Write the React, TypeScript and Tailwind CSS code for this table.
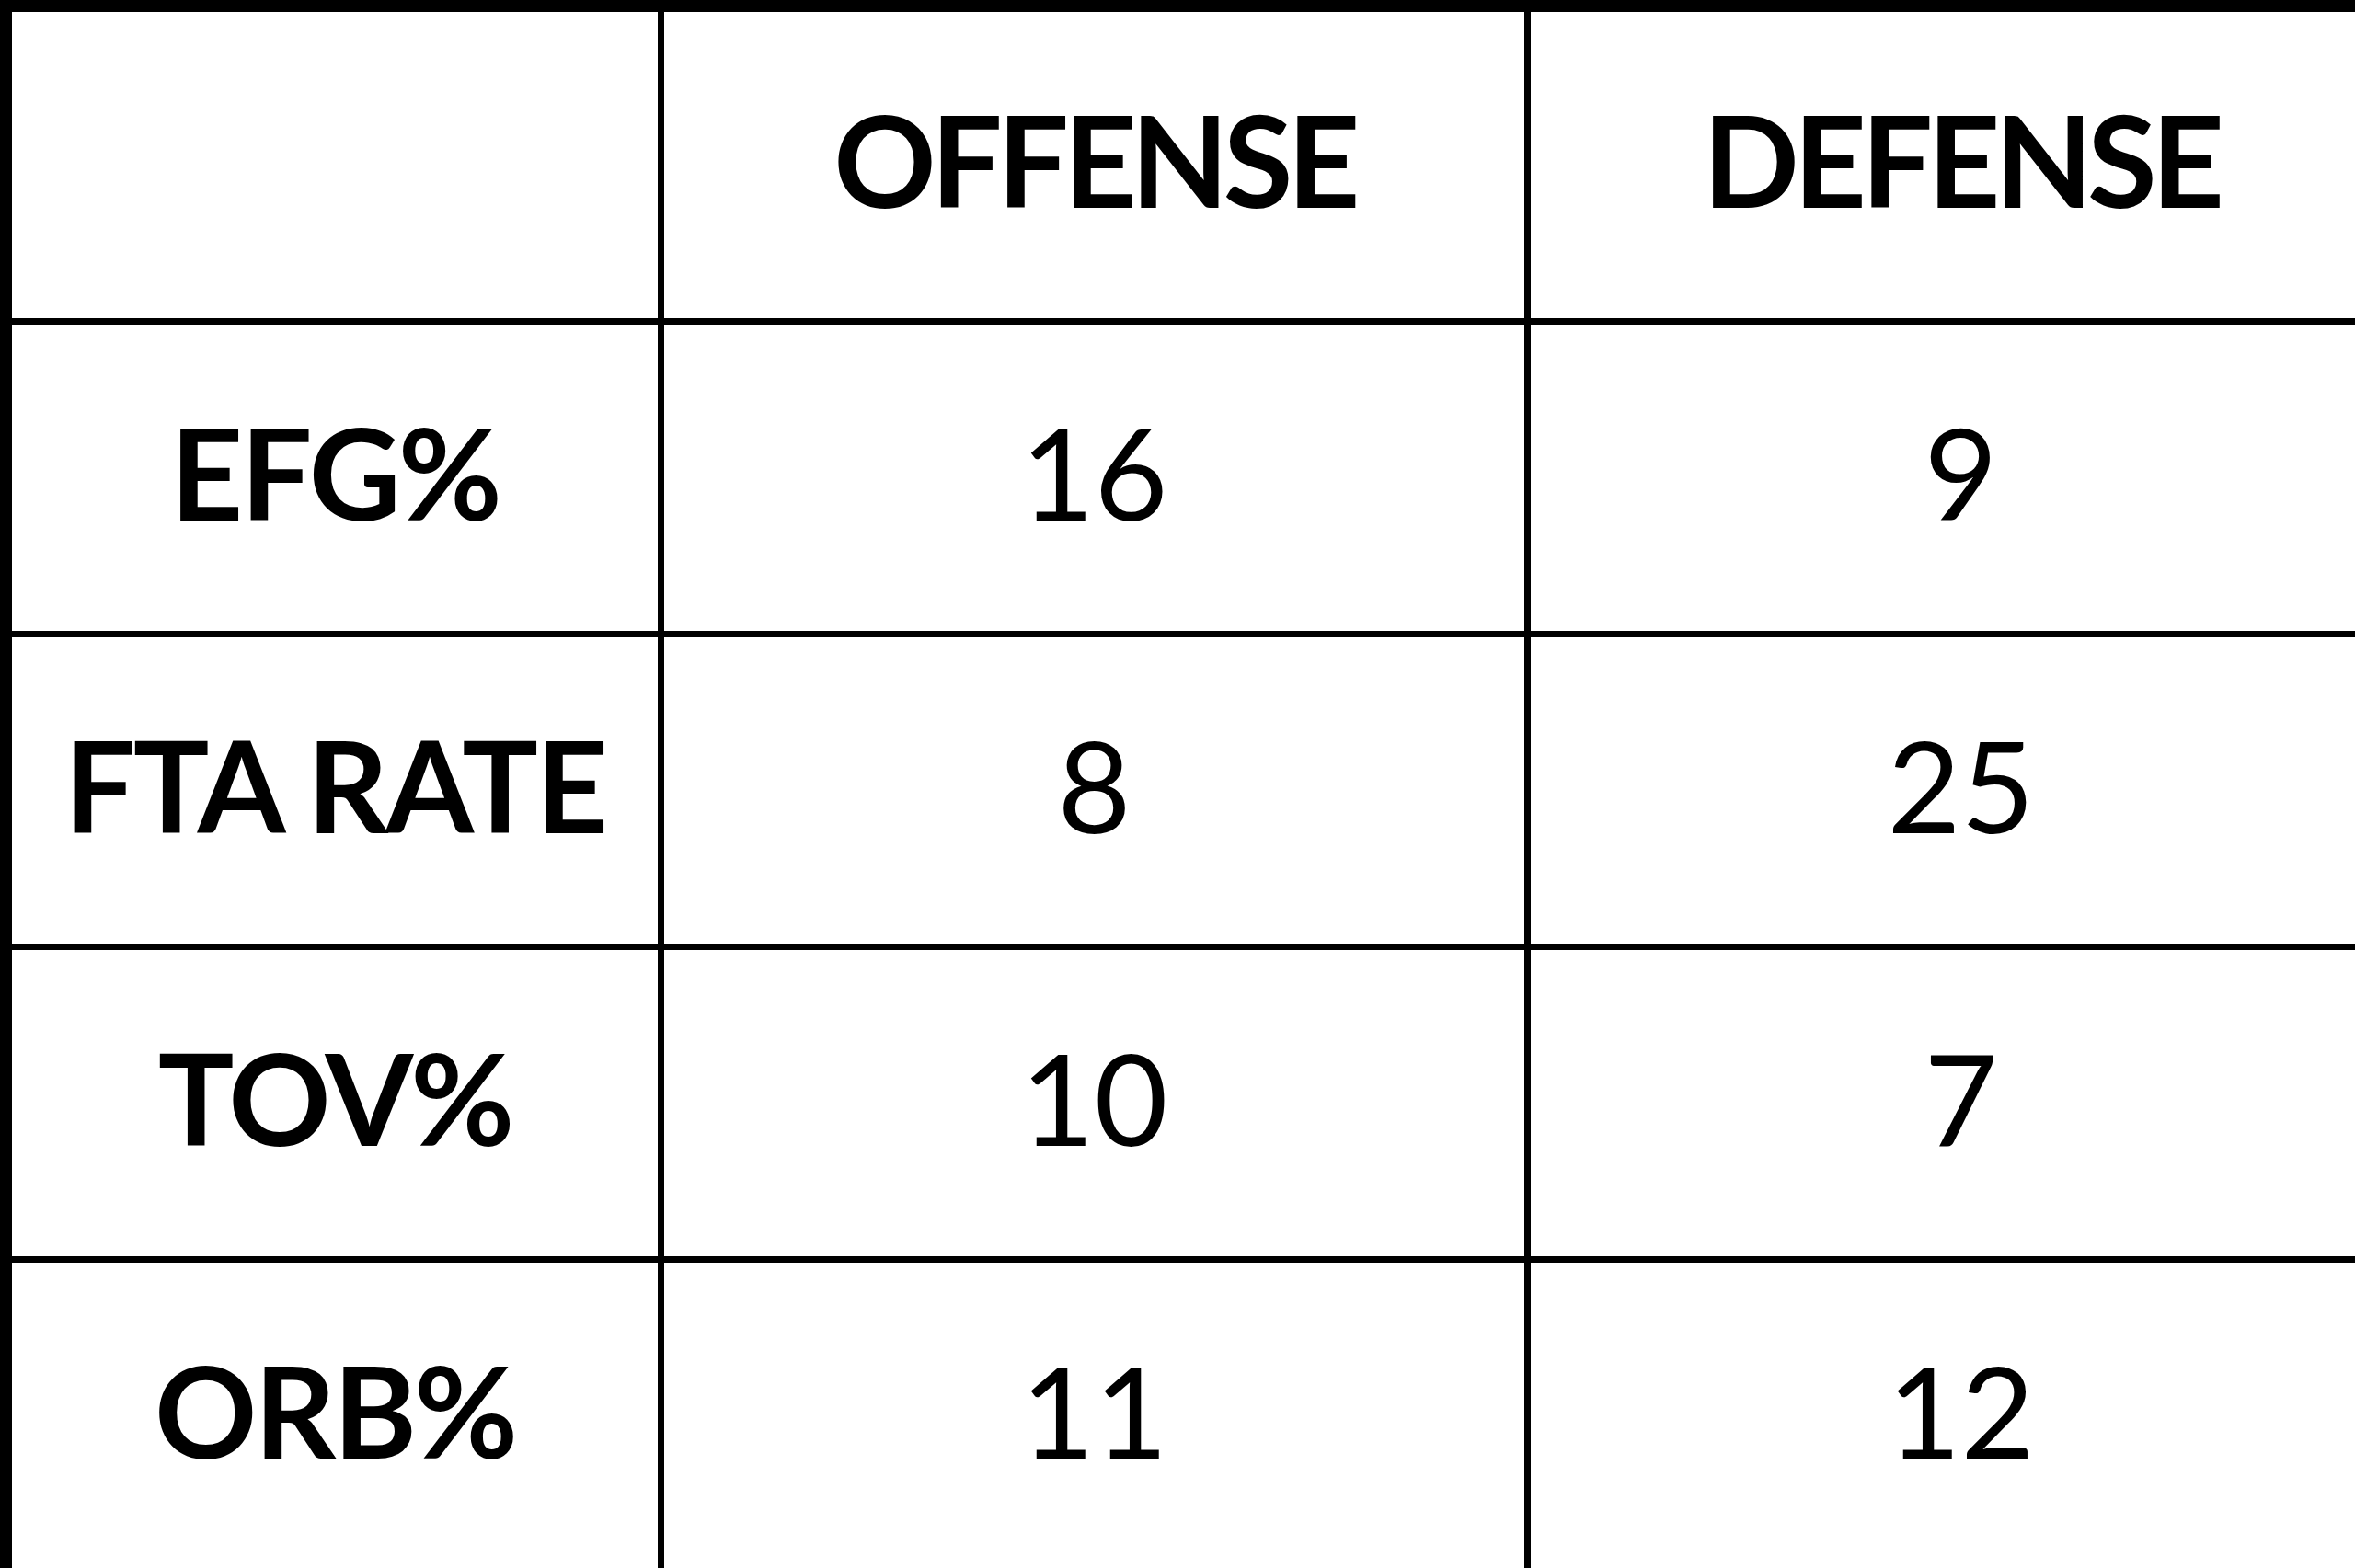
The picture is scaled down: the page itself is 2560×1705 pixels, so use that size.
const rows: [string, string, string][] = [
  ["EFG%", "16", "9"],
  ["FTA RATE", "8", "25"],
  ["TOV%", "10", "7"],
  ["ORB%", "11", "12"],
];

function Cell({ children, kind }: { children?: React.ReactNode; kind?: "head" | "label" }) {
  const weight =
    kind === "head"
      ? "font-bold tracking-[-6px]"
      : kind === "label"
        ? "font-bold tracking-[-3px]"
        : "font-normal";
  return (
    <div className="flex items-center justify-center bg-white pb-[14px]">
      <span className={`leading-none text-black text-[138px] font-['Lato',sans-serif] ${weight}`}>
        {children}
      </span>
    </div>
  );
}

export default function App() {
  return (
    <div className="h-[1705px] w-[2560px] overflow-hidden bg-black">
      <div className="grid w-[2600px] grid-cols-[702px_935px_935px] auto-rows-[333px] gap-[7px] pl-[13px] pt-[13px]">
        <Cell />
        <Cell kind="head">OFFENSE</Cell>
        <Cell kind="head">DEFENSE</Cell>
        {rows.map(([label, off, def]) => (
          <div key={label} className="contents">
            <Cell kind="label">{label}</Cell>
            <Cell>{off}</Cell>
            <Cell>{def}</Cell>
          </div>
        ))}
      </div>
    </div>
  );
}
